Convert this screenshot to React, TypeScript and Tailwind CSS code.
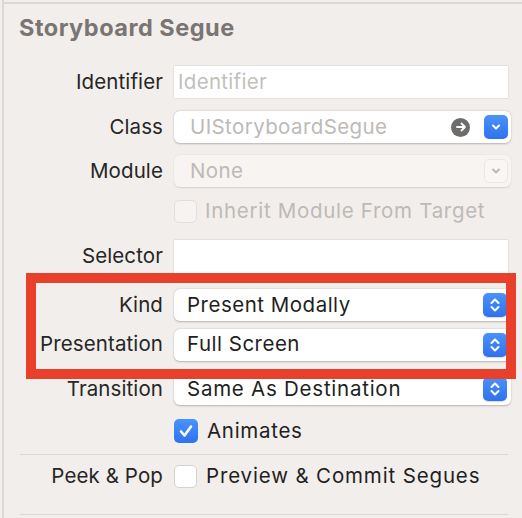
import { ReactNode } from 'react'

const font = { fontFamily: 'Inter, "Liberation Sans", sans-serif' }

function Row({
  label,
  children,
  className = '',
}: {
  label?: string
  children: ReactNode
  className?: string
}) {
  return (
    <div className={`flex items-center ${className}`}>
      <div className="w-[163px] shrink-0 text-right text-[20.5px] tracking-[0.1px] text-[#262626]">
        {label}
      </div>
      <div className="ml-[11px] flex min-w-0 flex-1 items-center">{children}</div>
    </div>
  )
}

function Stepper() {
  return (
    <div className="flex h-[24px] w-[24px] items-center justify-center rounded-[5px] bg-gradient-to-b from-[#4b92fa] to-[#2e72ee] shadow-[0_1px_1px_rgba(0,0,0,0.15)]">
      <svg width="12" height="16" viewBox="0 0 12 16" fill="none">
        <path d="M2.5 6 L6 2.5 L9.5 6" stroke="white" strokeWidth="2" strokeLinecap="round" strokeLinejoin="round" />
        <path d="M2.5 10 L6 13.5 L9.5 10" stroke="white" strokeWidth="2" strokeLinecap="round" strokeLinejoin="round" />
      </svg>
    </div>
  )
}

function Popup({ value, tracking = 'tracking-[0.5px]' }: { value: string; tracking?: string }) {
  return (
    <div
      className={`flex h-[32px] w-[337px] items-center justify-between rounded-[6px] bg-white pl-[13px] pr-[4px] text-[20.5px] text-[#1f1f1f] shadow-[0_0.5px_2px_rgba(0,0,0,0.25)] ${tracking}`}
    >
      <span>{value}</span>
      <Stepper />
    </div>
  )
}

function Checkbox({ checked, disabled }: { checked?: boolean; disabled?: boolean }) {
  if (checked) {
    return (
      <div className="flex h-[24px] w-[24px] items-center justify-center rounded-[5px] bg-gradient-to-b from-[#4b92fa] to-[#2e72ee]">
        <svg width="16" height="16" viewBox="0 0 16 16" fill="none">
          <path d="M3 8.5 L6.5 12.5 L13 3.5" stroke="white" strokeWidth="2.6" strokeLinecap="round" strokeLinejoin="round" />
        </svg>
      </div>
    )
  }
  return (
    <div
      className={`h-[23px] w-[23px] rounded-[5px] border ${
        disabled ? 'border-[#e2dedb] bg-[#f6f3f1]' : 'border-[#d6d2cf] bg-white'
      }`}
    />
  )
}

export default function App() {
  return (
    <div className="relative h-[518px] w-[522px] overflow-hidden bg-[#f2eeeb]" style={font}>
      <div className="absolute left-[2px] top-0 h-full w-[2px] bg-[#dcd8d5]" />
      <div className="absolute left-[4px] right-0 top-[2px] h-[2px] bg-[#dcd8d5]" />

      <div className="h-[44px] pl-[19px] pt-[14px] text-[23.5px] font-bold leading-[28px] tracking-[0.5px] text-[#7a7573]">
        Storyboard Segue
      </div>

      <div className="mt-[22px] flex flex-col">
        <Row className="h-[32px]" label="Identifier">
          <div className="flex h-[32px] w-[334px] items-center bg-white pl-[4px] text-[20.5px] tracking-[0.3px] text-[#c2bfbd] shadow-[0_0_1px_rgba(0,0,0,0.3)]">
            Identifier
          </div>
        </Row>

        <Row className="mt-[13px] h-[32px]" label="Class">
          <div className="flex h-[32px] w-[337px] items-center justify-between rounded-[6px] bg-white pl-[16px] pr-[3px] text-[20.5px] tracking-[0.4px] text-[#bdbab8] shadow-[0_0.5px_2px_rgba(0,0,0,0.25)]">
            <span>UIStoryboardSegue</span>
            <div className="flex items-center gap-[14px]">
              <div className="flex h-[19px] w-[19px] items-center justify-center rounded-full bg-[#6e6c6b]">
                <svg width="12" height="12" viewBox="0 0 12 12" fill="none">
                  <path d="M2 6 H10 M6.5 2.5 L10 6 L6.5 9.5" stroke="white" strokeWidth="1.8" strokeLinecap="round" strokeLinejoin="round" />
                </svg>
              </div>
              <div className="flex h-[24px] w-[24px] items-center justify-center rounded-[5px] bg-gradient-to-b from-[#4b92fa] to-[#2e72ee]">
                <svg width="12" height="12" viewBox="0 0 12 12" fill="none">
                  <path d="M3 4.5 L6 7.5 L9 4.5" stroke="white" strokeWidth="2" strokeLinecap="round" strokeLinejoin="round" />
                </svg>
              </div>
            </div>
          </div>
        </Row>

        <Row className="mt-[12px] h-[32px]" label="Module">
          <div className="flex h-[32px] w-[337px] items-center justify-between rounded-[6px] bg-[#f7f4f2] pl-[16px] pr-[3px] text-[20.5px] tracking-[0.4px] text-[#bdbab8] shadow-[0_0.5px_1.5px_rgba(0,0,0,0.12)]">
            <span>None</span>
            <div className="flex h-[24px] w-[24px] items-center justify-center rounded-[5px] border border-[#ebe7e4] bg-[#f9f7f5]">
              <svg width="12" height="12" viewBox="0 0 12 12" fill="none">
                <path d="M3 4.5 L6 7.5 L9 4.5" stroke="#b9b6b4" strokeWidth="1.8" strokeLinecap="round" strokeLinejoin="round" />
              </svg>
            </div>
          </div>
        </Row>

        <Row className="mt-[12px] h-[24px]">
          <Checkbox disabled />
          <span className="ml-[8px] text-[20.5px] tracking-[0.7px] text-[#bdbab8]">Inherit Module From Target</span>
        </Row>

        <Row className="mt-[17px] h-[33px]" label="Selector">
          <div className="h-[33px] w-[334px] bg-white shadow-[0_0_1px_rgba(0,0,0,0.3)]" />
        </Row>

        <Row className="mt-[16px] h-[32px]" label="Kind">
          <Popup value="Present Modally" />
        </Row>

        <Row className="mt-[7px] h-[33px]" label="Presentation">
          <Popup value="Full Screen" />
        </Row>

        <Row className="mt-[12px] h-[32px]" label="Transition">
          <Popup value="Same As Destination" tracking="tracking-[0.75px]" />
        </Row>

        <Row className="mt-[14px] h-[24px]">
          <Checkbox checked />
          <span className="ml-[9px] text-[20.5px] tracking-[0.7px] text-[#1f1f1f]">Animates</span>
        </Row>

        <div className="ml-[20px] mt-[11px] h-[1px] w-[488px] bg-[#dcd8d5]" />

        <Row className="mt-[10px] h-[23px]" label="Peek & Pop">
          <Checkbox />
          <span className="ml-[9px] text-[20.5px] tracking-[0.85px] text-[#1f1f1f]">Preview &amp; Commit Segues</span>
        </Row>

        <div className="ml-[20px] mt-[26px] h-[1px] w-[488px] bg-[#dcd8d5]" />
      </div>

      <div className="absolute left-[26px] top-[273px] h-[106px] w-[490px] border-[10px] border-[#e8402a]" />
    </div>
  )
}
